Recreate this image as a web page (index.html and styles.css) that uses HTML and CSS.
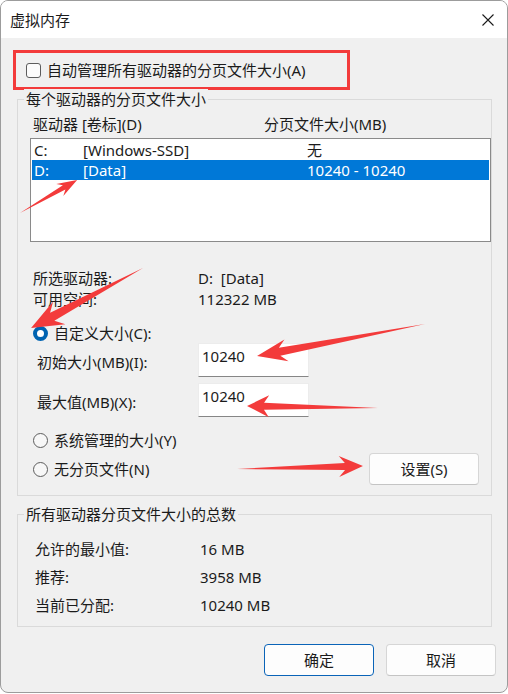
FILE: index.html
```html
<!DOCTYPE html>
<html lang="zh-CN">
<head>
    <meta charset="UTF-8">
    <meta name="viewport" content="width=device-width, initial-scale=1.0">
    <title>虚拟内存</title>
    <link rel="stylesheet" href="styles.css">
</head>
<body>
    <div class="window">
        <div class="titlebar">
            <span class="title">虚拟内存</span>
            <svg class="close" width="12" height="12" viewBox="0 0 12 12">
                <path d="M0.5 0.5 L11.5 11.5 M11.5 0.5 L0.5 11.5" stroke="#1b1b1b" stroke-width="1.1" fill="none"/>
            </svg>
        </div>
        <div class="content">
            <div class="auto-row">
                <span class="checkbox"></span>自动管理所有驱动器的分页文件大小(A)
            </div>

            <div class="group group-drives">
                <div class="group-title">每个驱动器的分页文件大小</div>
                <div class="list-head">
                    <span>驱动器 [卷标](D)</span>
                    <span>分页文件大小(MB)</span>
                </div>
                <div class="listbox">
                    <div class="list-row"><span>C:</span><span>[Windows-SSD]</span><span>无</span></div>
                    <div class="list-row selected"><span>D:</span><span>[Data]</span><span>10240 - 10240</span></div>
                </div>
                <div class="info">
                    <span>所选驱动器:</span><span>D:&nbsp; [Data]</span>
                    <span>可用空间:</span><span>112322 MB</span>
                </div>
                <div class="radio-row custom"><span class="radio checked"></span>自定义大小(C):</div>
                <div class="field-row">
                    <span class="field-label">初始大小(MB)(I):</span>
                    <div class="textbox">10240</div>
                </div>
                <div class="field-row second">
                    <span class="field-label">最大值(MB)(X):</span>
                    <div class="textbox">10240</div>
                </div>
                <div class="radio-row system"><span class="radio"></span>系统管理的大小(Y)</div>
                <div class="radio-row nofile">
                    <span class="radio"></span>无分页文件(N)
                    <button class="btn set-btn">设置(S)</button>
                </div>
            </div>

            <div class="group group-total">
                <div class="group-title">所有驱动器分页文件大小的总数</div>
                <div class="totals">
                    <span>允许的最小值:</span><span>16 MB</span>
                    <span>推荐:</span><span>3958 MB</span>
                    <span>当前已分配:</span><span>10240 MB</span>
                </div>
            </div>

            <div class="actions">
                <button class="btn default">确定</button>
                <button class="btn">取消</button>
            </div>
        </div>

        <!-- red annotation arrows -->
        <svg class="arrows" width="508" height="694" viewBox="0 0 508 694">
            <g fill="#f33b3b">
                <polygon transform="translate(20 213) rotate(-30.07)" points="0,0 51,-2.5 46,-7 66,0 46,7 51,2.5"/>
                <polygon transform="translate(143 268) rotate(151.8)" points="0,0 103,-4.5 95,-13 127,0 95,13 103,4.5"/>
                <polygon transform="translate(425 324) rotate(169.2)" points="0,0 148,-4 141,-11 171,0 141,11 148,4"/>
                <polygon transform="translate(378 408) rotate(180.9)" points="0,0 114,-3.5 109,-11 131,0 109,11 114,3.5"/>
                <polygon transform="translate(237 469) rotate(-1.36)" points="0,0 108,-3.5 102,-10.5 126,0 102,10.5 108,3.5"/>
            </g>
        </svg>
    </div>
</body>
</html>
```

FILE: styles.css
```css
body {
    margin: 0;
    background-color: #fff;
    font-family: 'Noto Sans', 'Noto Sans CJK SC', sans-serif;
    font-size: 15px;
    color: #1b1b1b;
}

.window {
    position: relative;
    width: 508px;
    height: 693px;
    box-sizing: border-box;
    border: 1px solid #9c9c9c;
    border-radius: 8px;
    overflow: hidden;
    background-color: #f0f0f0;
    display: flex;
    flex-direction: column;
}

.titlebar {
    height: 37px;
    background-color: #fff;
    display: flex;
    align-items: center;
    justify-content: space-between;
    padding-left: 9px;
    line-height: 20px;
}

.close {
    margin-right: 13px;
}

.content {
    flex: 1;
    padding-top: 12px;
}

/* red highlight box around the checkbox */
.auto-row {
    width: 337px;
    height: 40px;
    box-sizing: border-box;
    margin-left: 12px;
    border: 3px solid #f33b3b;
    padding-left: 10px;
    display: flex;
    align-items: center;
    line-height: 20px;
}

.checkbox {
    width: 15px;
    height: 15px;
    box-sizing: border-box;
    border: 1px solid #5c5c5c;
    border-radius: 3px;
    background-color: #fbfbfb;
    margin-right: 6px;
}

.group {
    width: 475px;
    box-sizing: border-box;
    margin-left: 16px;
    border: 1px solid #dadada;
    line-height: 20px;
}

.group-drives {
    margin-top: 9px;
    height: 397px;
    padding-bottom: 10px;
}

.group-total {
    margin-top: 18px;
    height: 113px;
    padding-bottom: 7px;
}

.group-title {
    width: fit-content;
    margin: -11px 0 0 6px;
    padding: 0 2px;
    background-color: #f0f0f0;
}

.list-head {
    display: grid;
    grid-template-columns: 231px 1fr;
    margin-top: 5px;
    padding-left: 15px;
}

.listbox {
    width: 461px;
    height: 104px;
    box-sizing: border-box;
    margin: 4px 0 0 12px;
    border: 1px solid #8a8a8a;
    background-color: #fff;
    padding: 1px;
}

.list-row {
    display: grid;
    grid-template-columns: 49px 224px 1fr;
    height: 20px;
    padding-left: 2px;
}

.list-row.selected {
    background-color: #0078d7;
    color: #fff;
}

.info {
    display: grid;
    grid-template-columns: 165px 1fr;
    margin-top: 26px;
    padding-left: 15px;
    line-height: 21px;
}

.radio-row {
    display: flex;
    align-items: center;
    padding-left: 15px;
    height: 20px;
}

.radio-row.custom {
    margin-top: 13px;
}

.radio-row.system {
    margin-top: 13px;
}

.radio-row.nofile {
    margin-top: 3px;
    height: 32px;
}

.radio {
    width: 15px;
    height: 15px;
    box-sizing: border-box;
    border: 1px solid #5d5d5d;
    border-radius: 50%;
    background-color: #f7f7f7;
    margin-right: 6px;
}

.radio.checked {
    border: 4px solid #0063b1;
    background-color: #fff;
}

.field-row {
    display: flex;
    align-items: center;
    height: 34px;
}

.field-row.second {
    margin-top: 6px;
}

.field-label {
    width: 161px;
    padding: 3px 0 0 19px;
}

.textbox {
    width: 111px;
    height: 34px;
    box-sizing: border-box;
    background-color: #fff;
    border: 1px solid #ececec;
    border-bottom-color: #868686;
    padding: 2px 0 0 3px;
}

.btn {
    width: 110px;
    height: 32px;
    box-sizing: border-box;
    font-family: inherit;
    font-size: 15px;
    line-height: 20px;
    color: #1b1b1b;
    background-color: #fdfdfd;
    border: 1px solid #d6d6d6;
    border-bottom-color: #c4c4c4;
    border-radius: 4px;
    padding: 0;
}

.set-btn {
    margin-left: auto;
    margin-right: 12px;
}

.btn.default {
    border-color: #0a64b8;
}

.totals {
    display: grid;
    grid-template-columns: 165px 1fr;
    margin-top: 11px;
    padding-left: 17px;
    line-height: 28px;
}

.actions {
    display: flex;
    justify-content: flex-end;
    gap: 12px;
    margin-top: 17px;
    padding-right: 11px;
}

.arrows {
    position: absolute;
    left: -1px;
    top: -1px;
    pointer-events: none;
}
```
